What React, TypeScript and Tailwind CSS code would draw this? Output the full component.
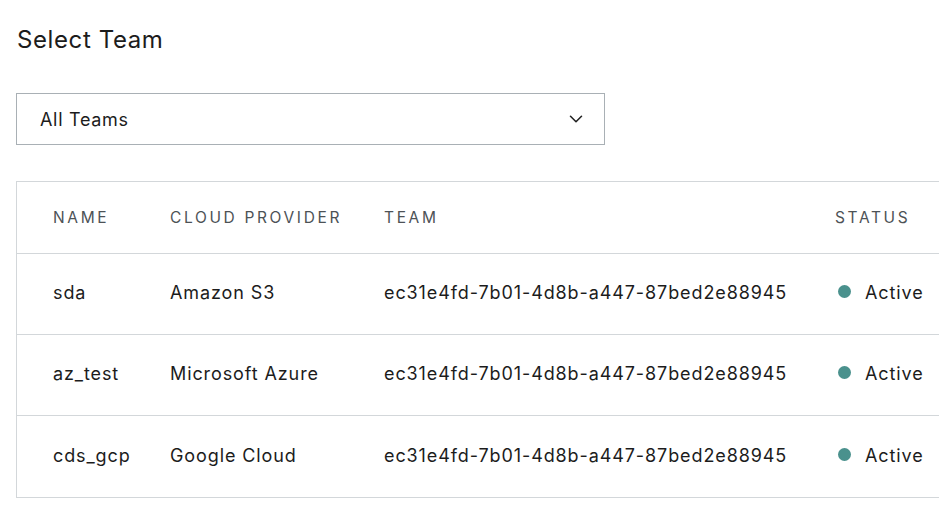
import { ChevronDown } from 'lucide-react';

const rows = [
  { name: 'sda', provider: 'Amazon S3', team: 'ec31e4fd-7b01-4d8b-a447-87bed2e88945', status: 'Active' },
  { name: 'az_test', provider: 'Microsoft Azure', team: 'ec31e4fd-7b01-4d8b-a447-87bed2e88945', status: 'Active' },
  { name: 'cds_gcp', provider: 'Google Cloud', team: 'ec31e4fd-7b01-4d8b-a447-87bed2e88945', status: 'Active' },
];

export default function App() {
  return (
    <div className="w-full overflow-hidden bg-white text-[#1a1a1a] font-['Inter',sans-serif]">
      <div className="pl-4 pt-[24px]">
        <h1 className="pl-px text-[24px] leading-[32px] font-normal tracking-[0.6px] text-[#1c1c1c]">Select Team</h1>

        {/* Team select */}
        <button className="mt-[37px] flex h-[52px] w-[589px] items-center justify-between border border-[#a9b0b5] pl-[23px] pr-[17px] text-left text-[18px] tracking-[0.7px] text-[#1c1c1c]">
          <span>All Teams</span>
          <ChevronDown className="h-[22px] w-[22px] text-[#222]" strokeWidth={1.7} />
        </button>

        {/* Clusters table */}
        <div className="mt-[36px] w-[960px] border border-[#d3d7da]">
          <div className="flex h-[72px] items-center border-b border-[#d3d7da] text-[15.5px] tracking-[0.17em] text-[#4d5256]">
            <div className="w-[153px] pl-[36px]">NAME</div>
            <div className="w-[214px]">CLOUD PROVIDER</div>
            <div className="w-[451px]">TEAM</div>
            <div>STATUS</div>
          </div>
          {rows.map((row, i) => (
            <div
              key={row.name}
              className={`flex h-[81px] items-center pb-[3px] text-[18px] tracking-[0.9px] text-[#1c1c1c] ${i < rows.length - 1 ? 'border-b border-[#d3d7da]' : ''}`}
            >
              <div className="w-[153px] pl-[36px]">{row.name}</div>
              <div className="w-[214px]">{row.provider}</div>
              <div className="w-[451px]">{row.team}</div>
              <div className="flex items-center gap-[14px] pl-[3px]">
                <span className="h-[13px] w-[13px] -translate-y-[1px] rounded-full bg-[#4a918d]" />
                <span>{row.status}</span>
              </div>
            </div>
          ))}
        </div>
      </div>
    </div>
  );
}
